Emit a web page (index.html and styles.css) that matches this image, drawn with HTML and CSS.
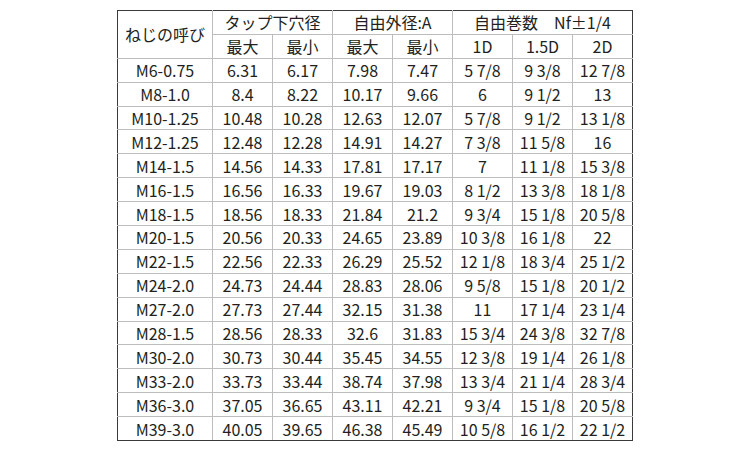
FILE: index.html
```html
<!DOCTYPE html>
<html lang="ja">
<head>
<meta charset="utf-8">
<link rel="stylesheet" href="styles.css">
</head>
<body>
<table class="spec">
<colgroup>
<col class="c-name"><col class="c-n"><col class="c-n"><col class="c-n"><col class="c-n"><col class="c-n"><col class="c-n"><col class="c-n">
</colgroup>
<thead>
<tr><th rowspan="2">ねじの呼び</th><th colspan="2">タップ下穴径</th><th colspan="2">自由外径:A</th><th colspan="3">自由巻数　Nf±1/4</th></tr>
<tr><th>最大</th><th>最小</th><th>最大</th><th>最小</th><th>1D</th><th>1.5D</th><th>2D</th></tr>
</thead>
<tbody>
<tr><td>M6-0.75</td><td>6.31</td><td>6.17</td><td>7.98</td><td>7.47</td><td>5 7/8</td><td>9 3/8</td><td>12 7/8</td></tr>
<tr><td>M8-1.0</td><td>8.4</td><td>8.22</td><td>10.17</td><td>9.66</td><td>6</td><td>9 1/2</td><td>13</td></tr>
<tr><td>M10-1.25</td><td>10.48</td><td>10.28</td><td>12.63</td><td>12.07</td><td>5 7/8</td><td>9 1/2</td><td>13 1/8</td></tr>
<tr><td>M12-1.25</td><td>12.48</td><td>12.28</td><td>14.91</td><td>14.27</td><td>7 3/8</td><td>11 5/8</td><td>16</td></tr>
<tr><td>M14-1.5</td><td>14.56</td><td>14.33</td><td>17.81</td><td>17.17</td><td>7</td><td>11 1/8</td><td>15 3/8</td></tr>
<tr><td>M16-1.5</td><td>16.56</td><td>16.33</td><td>19.67</td><td>19.03</td><td>8 1/2</td><td>13 3/8</td><td>18 1/8</td></tr>
<tr><td>M18-1.5</td><td>18.56</td><td>18.33</td><td>21.84</td><td>21.2</td><td>9 3/4</td><td>15 1/8</td><td>20 5/8</td></tr>
<tr><td>M20-1.5</td><td>20.56</td><td>20.33</td><td>24.65</td><td>23.89</td><td>10 3/8</td><td>16 1/8</td><td>22</td></tr>
<tr><td>M22-1.5</td><td>22.56</td><td>22.33</td><td>26.29</td><td>25.52</td><td>12 1/8</td><td>18 3/4</td><td>25 1/2</td></tr>
<tr><td>M24-2.0</td><td>24.73</td><td>24.44</td><td>28.83</td><td>28.06</td><td>9 5/8</td><td>15 1/8</td><td>20 1/2</td></tr>
<tr><td>M27-2.0</td><td>27.73</td><td>27.44</td><td>32.15</td><td>31.38</td><td>11</td><td>17 1/4</td><td>23 1/4</td></tr>
<tr><td>M28-1.5</td><td>28.56</td><td>28.33</td><td>32.6</td><td>31.83</td><td>15 3/4</td><td>24 3/8</td><td>32 7/8</td></tr>
<tr><td>M30-2.0</td><td>30.73</td><td>30.44</td><td>35.45</td><td>34.55</td><td>12 3/8</td><td>19 1/4</td><td>26 1/8</td></tr>
<tr><td>M33-2.0</td><td>33.73</td><td>33.44</td><td>38.74</td><td>37.98</td><td>13 3/4</td><td>21 1/4</td><td>28 3/4</td></tr>
<tr><td>M36-3.0</td><td>37.05</td><td>36.65</td><td>43.11</td><td>42.21</td><td>9 3/4</td><td>15 1/8</td><td>20 5/8</td></tr>
<tr><td>M39-3.0</td><td>40.05</td><td>39.65</td><td>46.38</td><td>45.49</td><td>10 5/8</td><td>16 1/2</td><td>22 1/2</td></tr>
</tbody>
</table>
</body>
</html>
```

FILE: styles.css
```css
html, body {
  margin: 0;
  padding: 0;
  background: #ffffff;
}

body {
  padding-top: 10px;
  font-family: "Noto Sans CJK JP", "Noto Sans", sans-serif;
  color: #231f20;
}

.spec {
  margin: 0 auto;
  border-collapse: collapse;
  table-layout: fixed;
  width: 515px;
  border: 1px solid #3a3a3a;
  font-size: 16px;
  line-height: 1;
}

.c-name { width: 95px; }
.c-n { width: 60px; }

.spec th,
.spec td {
  border: 1px solid #bdbdbd;
  height: 22.9px;
  padding: 0;
  text-align: center;
  vertical-align: middle;
  font-weight: normal;
  white-space: nowrap;
}

.spec tr > :first-child { border-left-color: #3a3a3a; }
.spec tr > :last-child { border-right-color: #3a3a3a; }
.spec thead tr:first-child > * { border-top-color: #3a3a3a; }
.spec thead tr:first-child > :first-child { border-left-color: #3a3a3a; }
.spec tbody tr:last-child > * { border-bottom-color: #3a3a3a; }
```
